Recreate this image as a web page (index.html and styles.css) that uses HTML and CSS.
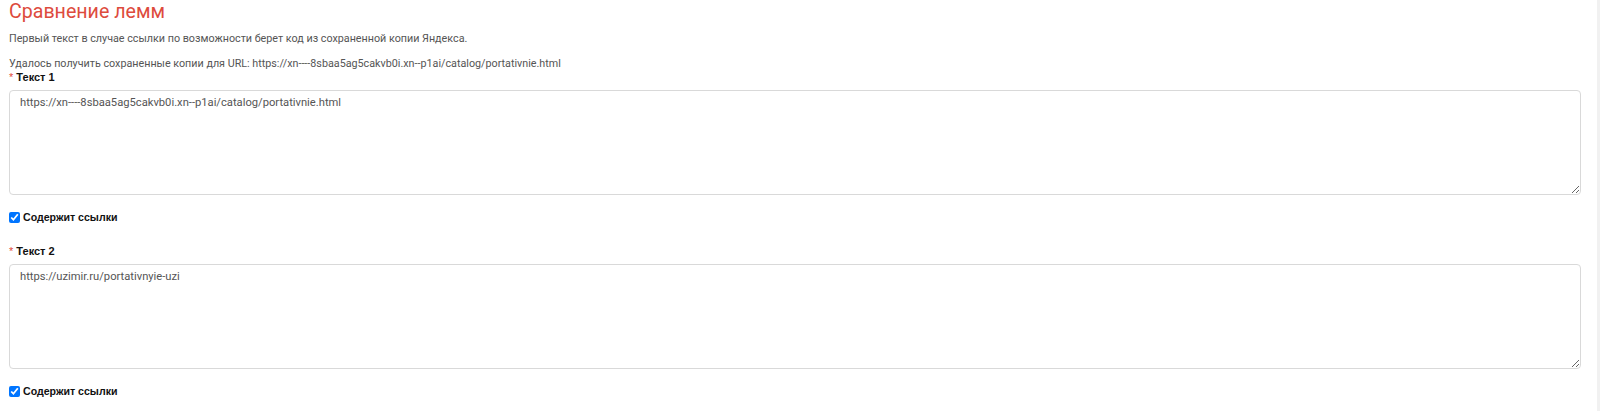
FILE: index.html
```html
<!DOCTYPE html>
<html lang="ru">
<head>
<meta charset="utf-8">
<title>Сравнение лемм</title>
<link rel="stylesheet" href="styles.css">
</head>
<body>
<div class="page">
  <h1 class="title">Сравнение лемм</h1>
  <p class="note">Первый текст в случае ссылки по возможности берет код из сохраненной копии Яндекса.</p>
  <p class="note note-tight">Удалось получить сохраненные копии для URL: https://xn----8sbaa5ag5cakvb0i.xn--p1ai/catalog/portativnie.html</p>
  <div class="group">
    <label class="field-label"><span class="req">*</span> Текст 1</label>
    <textarea class="field">https://xn----8sbaa5ag5cakvb0i.xn--p1ai/catalog/portativnie.html</textarea>
    <label class="check"><input type="checkbox" checked> <span>Содержит ссылки</span></label>
  </div>
  <div class="group">
    <label class="field-label"><span class="req">*</span> Текст 2</label>
    <textarea class="field">https://uzimir.ru/portativnyie-uzi</textarea>
    <label class="check"><input type="checkbox" checked> <span>Содержит ссылки</span></label>
  </div>
</div>
</body>
</html>
```

FILE: styles.css
```css
html, body {
  margin: 0;
  padding: 0;
  background: #fff;
}
.page {
  min-height: 411px;
  box-sizing: border-box;
  padding: 0 19px 0 9px;
  box-shadow: inset -3px 0 0 #f1f1f1;
  font-family: Roboto, "Liberation Sans", sans-serif;
  color: #555;
}
.title {
  margin: 0;
  font-family: Roboto, sans-serif;
  font-weight: 400;
  font-size: 19.6px;
  line-height: 24px;
  color: #dd4b3d;
}
.note {
  margin: 7px 0 9px;
  font-size: 10.75px;
  line-height: 16px;
  color: #555;
}
.note-tight {
  margin: 0 0 -3px;
}
.group {
  display: flex;
  flex-direction: column;
  align-items: flex-start;
  margin-bottom: 18px;
}
.field-label {
  font-family: "Liberation Sans", Arial, sans-serif;
  font-weight: 700;
  font-size: 11px;
  line-height: 16px;
  color: #111;
}
.req {
  color: #e2493b;
  font-weight: 400;
}
.field {
  display: block;
  box-sizing: border-box;
  width: 100%;
  height: 105px;
  margin: 5px 0 14px;
  padding: 4px 10px;
  border: 1px solid #d9d9d9;
  border-radius: 4px;
  font-family: Roboto, sans-serif;
  font-size: 11.2px;
  line-height: 16px;
  color: #555;
  resize: vertical;
  outline: none;
}
.check {
  display: flex;
  align-items: center;
  gap: 3px;
  font-family: "Liberation Sans", Arial, sans-serif;
  font-weight: 700;
  font-size: 10.6px;
  line-height: 16px;
  color: #111;
}
.check input {
  width: 11px;
  height: 11px;
  margin: 0;
}
```
